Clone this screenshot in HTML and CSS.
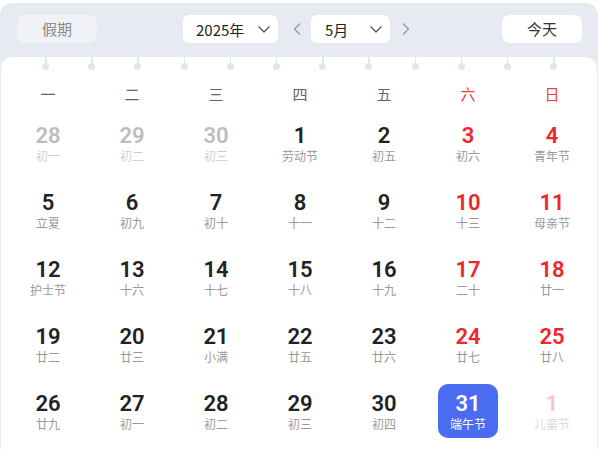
FILE: index.html
```html
<!DOCTYPE html>
<html lang="zh-CN">
<head>
<meta charset="utf-8">
<title>日历</title>
<link rel="stylesheet" href="styles.css">
</head>
<body>
<div class="panel">
  <div class="toolbar">
    <button class="btn holiday">假期</button>
    <div class="select year"><span>2025年</span><svg class="chev" width="12" height="7" viewBox="0 0 12 7"><path d="M1 1 L6 6 L11 1" fill="none" stroke="#555" stroke-width="1.3" stroke-linecap="round" stroke-linejoin="round"/></svg></div>
    <svg class="arrow prev" width="8" height="12" viewBox="0 0 8 12"><path d="M6.5 1 L1.5 6 L6.5 11" fill="none" stroke="#999" stroke-width="1.3" stroke-linecap="round" stroke-linejoin="round"/></svg>
    <div class="select month"><span>5月</span><svg class="chev" width="12" height="7" viewBox="0 0 12 7"><path d="M1 1 L6 6 L11 1" fill="none" stroke="#555" stroke-width="1.3" stroke-linecap="round" stroke-linejoin="round"/></svg></div>
    <svg class="arrow next" width="8" height="12" viewBox="0 0 8 12"><path d="M1.5 1 L6.5 6 L1.5 11" fill="none" stroke="#999" stroke-width="1.3" stroke-linecap="round" stroke-linejoin="round"/></svg>
    <button class="btn today">今天</button>
  </div>
  <div class="card">
    <div class="rings">
      <i></i><i></i><i></i><i></i><i></i><i></i><i></i><i></i><i></i><i></i><i></i><i></i>
    </div>
    <div class="week">
      <span>一</span><span>二</span><span>三</span><span>四</span><span>五</span><span class="red">六</span><span class="red">日</span>
    </div>
    <div class="days">
      <div class="day other"><b>28</b><em>初一</em></div>
      <div class="day other"><b>29</b><em>初二</em></div>
      <div class="day other"><b>30</b><em>初三</em></div>
      <div class="day"><b>1</b><em>劳动节</em></div>
      <div class="day"><b>2</b><em>初五</em></div>
      <div class="day wk"><b>3</b><em>初六</em></div>
      <div class="day wk"><b>4</b><em>青年节</em></div>

      <div class="day"><b>5</b><em>立夏</em></div>
      <div class="day"><b>6</b><em>初九</em></div>
      <div class="day"><b>7</b><em>初十</em></div>
      <div class="day"><b>8</b><em>十一</em></div>
      <div class="day"><b>9</b><em>十二</em></div>
      <div class="day wk"><b>10</b><em>十三</em></div>
      <div class="day wk"><b>11</b><em>母亲节</em></div>

      <div class="day"><b>12</b><em>护士节</em></div>
      <div class="day"><b>13</b><em>十六</em></div>
      <div class="day"><b>14</b><em>十七</em></div>
      <div class="day"><b>15</b><em>十八</em></div>
      <div class="day"><b>16</b><em>十九</em></div>
      <div class="day wk"><b>17</b><em>二十</em></div>
      <div class="day wk"><b>18</b><em>廿一</em></div>

      <div class="day"><b>19</b><em>廿二</em></div>
      <div class="day"><b>20</b><em>廿三</em></div>
      <div class="day"><b>21</b><em>小满</em></div>
      <div class="day"><b>22</b><em>廿五</em></div>
      <div class="day"><b>23</b><em>廿六</em></div>
      <div class="day wk"><b>24</b><em>廿七</em></div>
      <div class="day wk"><b>25</b><em>廿八</em></div>

      <div class="day"><b>26</b><em>廿九</em></div>
      <div class="day"><b>27</b><em>初一</em></div>
      <div class="day"><b>28</b><em>初二</em></div>
      <div class="day"><b>29</b><em>初三</em></div>
      <div class="day"><b>30</b><em>初四</em></div>
      <div class="day selected"><b>31</b><em>端午节</em></div>
      <div class="day other wk"><b>1</b><em>儿童节</em></div>
    </div>
  </div>
</div>
</body>
</html>
```

FILE: styles.css
```css
* { box-sizing: border-box; }
html, body { margin: 0; padding: 0; background: #fff; }
body {
  width: 600px;
  height: 449px;
  overflow: hidden;
  font-family: "Noto Sans CJK SC", "Noto Sans", sans-serif;
}
.panel {
  margin-top: 3px;
  width: 598px;
  height: 446px;
  background: #e8eaf2;
  border-radius: 12px 12px 0 0;
  padding: 12px 1px 0 1px;
  display: flex;
  flex-direction: column;
}
.toolbar {
  height: 28px;
  display: flex;
  align-items: center;
  padding: 0 15px 0 16px;
}
.btn {
  border: none;
  height: 28px;
  width: 80px;
  border-radius: 8px;
  font-family: inherit;
  font-size: 15px;
  padding: 0;
  line-height: 28px;
}
.holiday { background: #f1f2f7; color: #8a8a8a; }
.today { background: #fff; color: #333; margin-left: auto; }
.select {
  height: 28px;
  background: #fff;
  border-radius: 6px;
  display: flex;
  align-items: center;
  justify-content: space-between;
  padding: 0 8px 0 13px;
  font-size: 15px;
  color: #222;
}
.year { width: 95px; margin-left: 86px; }
.month { width: 79px; margin-left: 10px; padding-left: 14px; }
.arrow { display: block; }
.prev { margin-left: 15px; }
.next { margin-left: 12px; }
.card {
  flex: 1;
  margin-top: 14px;
  background: #fff;
  border-radius: 12px 12px 0 0;
  padding: 0 5px;
}
.rings {
  height: 13px;
  display: flex;
  gap: 39.2px;
  padding-left: 36px;
}
.rings i {
  display: block;
  width: 7px;
  height: 13px;
  position: relative;
}
.rings i::before {
  content: "";
  position: absolute;
  left: 3px;
  top: 0;
  width: 1.5px;
  height: 7px;
  background: #e3e5ee;
}
.rings i::after {
  content: "";
  position: absolute;
  left: 0;
  top: 6px;
  width: 7px;
  height: 7px;
  border-radius: 50%;
  background: #e3e5ee;
}
.week {
  margin-top: 8px;
  display: grid;
  grid-template-columns: repeat(7, 84px);
  height: 30px;
  align-items: center;
  text-align: center;
  font-size: 15px;
  color: #666;
}
.week .red { color: #f23c3c; }
.days {
  margin-top: 8px;
  display: grid;
  grid-template-columns: repeat(7, 84px);
  row-gap: 13px;
  justify-items: center;
}
.day {
  width: 60px;
  height: 54px;
  border-radius: 10px;
  padding-top: 7px;
  text-align: center;
}
.day b {
  display: block;
  font-family: "Roboto", "DejaVu Sans", sans-serif;
  font-weight: 600;
  font-size: 22px;
  line-height: 25px;
  color: #222;
}
.day em {
  display: block;
  font-style: normal;
  font-size: 12px;
  line-height: 16px;
  color: #999;
}
.day.wk b { color: #f0262a; }
.day.other b { color: #bdbdbd; }
.day.other em { color: #cfcfcf; }
.day.other.wk b { color: #f9c4c4; }
.day.other.wk em { color: #dcdcdc; }
.day.selected { background: #4a6cf0; }
.day.selected b, .day.selected em { color: #fff; }
```
